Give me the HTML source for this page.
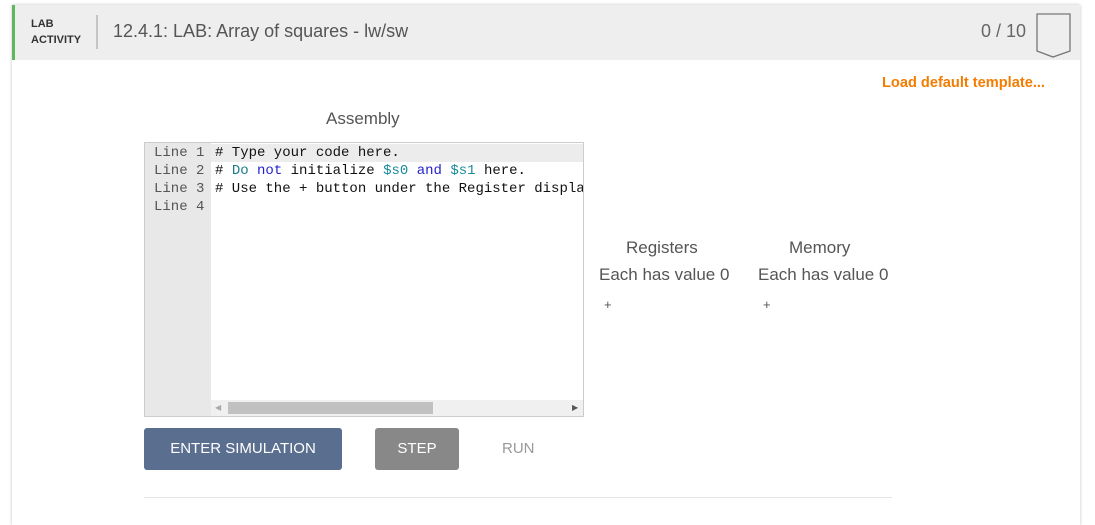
<!DOCTYPE html>
<html><head><style>
*{box-sizing:border-box;margin:0;padding:0}
body{width:1095px;height:509px;background:#fff;font-family:"Liberation Sans",sans-serif;overflow:hidden;position:relative}
.card{position:absolute;left:12px;top:5px;width:1068px;height:520px;background:#fff;box-shadow:0 0 3px rgba(0,0,0,.25)}
.hdr{position:absolute;left:0;top:0;width:1068px;height:55px;background:#eeeeee;border-left:3px solid #5cb85c}
.lab{position:absolute;left:16px;top:11px;font-size:11px;font-weight:bold;color:#333;line-height:16px}
.sep{position:absolute;left:81px;top:10px;width:2px;height:34px;background:#c4c4c4}
.title{position:absolute;left:98px;top:16px;font-size:18px;color:#555}
.score{position:absolute;left:966px;top:16px;font-size:18px;color:#666}
.abs{position:absolute}
.mono{font-family:"Liberation Mono",monospace;font-size:14px;line-height:18px;white-space:pre}
</style></head><body>
<div class="card">
 <div class="hdr">
  <div class="lab">LAB<br>ACTIVITY</div>
  <div class="sep"></div>
  <div class="title">12.4.1: LAB: Array of squares - lw/sw</div>
  <div class="score">0 / 10</div>
  <svg class="abs" style="left:1019px;top:7px" width="40" height="48"><path d="M3 2H36V39L19 45L3 39Z" fill="none" stroke="#777" stroke-width="1.3"/></svg>
 </div>
</div>
<div class="abs" style="left:882px;top:75px;font-size:14.6px;font-weight:bold;color:#f57c00">Load default template...</div>
<div class="abs" style="left:326px;top:109px;font-size:17px;color:#555">Assembly</div>
<div class="abs" style="left:144px;top:142px;width:440px;height:275px;border:1px solid #ccc;background:#fff">
 <div class="abs" style="left:0;top:0;width:66px;height:273px;background:#e8e8e8"></div>
 <div class="abs" style="left:66px;top:1px;width:372px;height:18px;background:#ececec"></div>
 <div class="abs mono" style="left:9px;top:1px;color:#555">Line 1
Line 2
Line 3
Line 4</div>
 <div class="abs mono" style="left:70px;top:1px;width:368px;overflow:hidden;color:#111"># Type your code here.
# <span style="color:#1a7a8a">Do</span> <span style="color:#22c">not</span> initialize <span style="color:#1a8a9a">$s0</span> <span style="color:#22c">and</span> <span style="color:#1a8a9a">$s1</span> here.
# Use the + button under the Register display</div>
 <div class="abs" style="left:66px;top:257px;width:372px;height:16px;background:#f0f0f0"></div>
 <div class="abs" style="left:83px;top:259px;width:205px;height:12px;background:#c1c1c1"></div>
 <div class="abs" style="left:70px;top:260px;font-size:8px;color:#aaa">◀</div>
 <div class="abs" style="left:427px;top:260px;font-size:8px;color:#555">▶</div>
</div>
<div class="abs" style="left:626px;top:238px;font-size:17px;color:#555">Registers</div>
<div class="abs" style="left:599px;top:265px;font-size:17px;color:#555">Each has value 0</div>
<div class="abs" style="left:604px;top:297px;font-size:13px;color:#555">+</div>
<div class="abs" style="left:789px;top:238px;font-size:17px;color:#555">Memory</div>
<div class="abs" style="left:758px;top:265px;font-size:17px;color:#555">Each has value 0</div>
<div class="abs" style="left:763px;top:297px;font-size:13px;color:#555">+</div>
<div class="abs" style="left:144px;top:428px;width:198px;height:42px;background:#5a6e90;border-radius:3px;color:#fff;font-size:15px;line-height:42px;text-align:center">ENTER SIMULATION</div>
<div class="abs" style="left:375px;top:428px;width:84px;height:42px;background:#888;border-radius:3px;color:#fff;font-size:15px;line-height:42px;text-align:center">STEP</div>
<div class="abs" style="left:502px;top:440px;font-size:15px;color:#999">RUN</div>
<div class="abs" style="left:144px;top:497px;width:748px;height:1px;background:#e6e6e6"></div>
</body></html>
